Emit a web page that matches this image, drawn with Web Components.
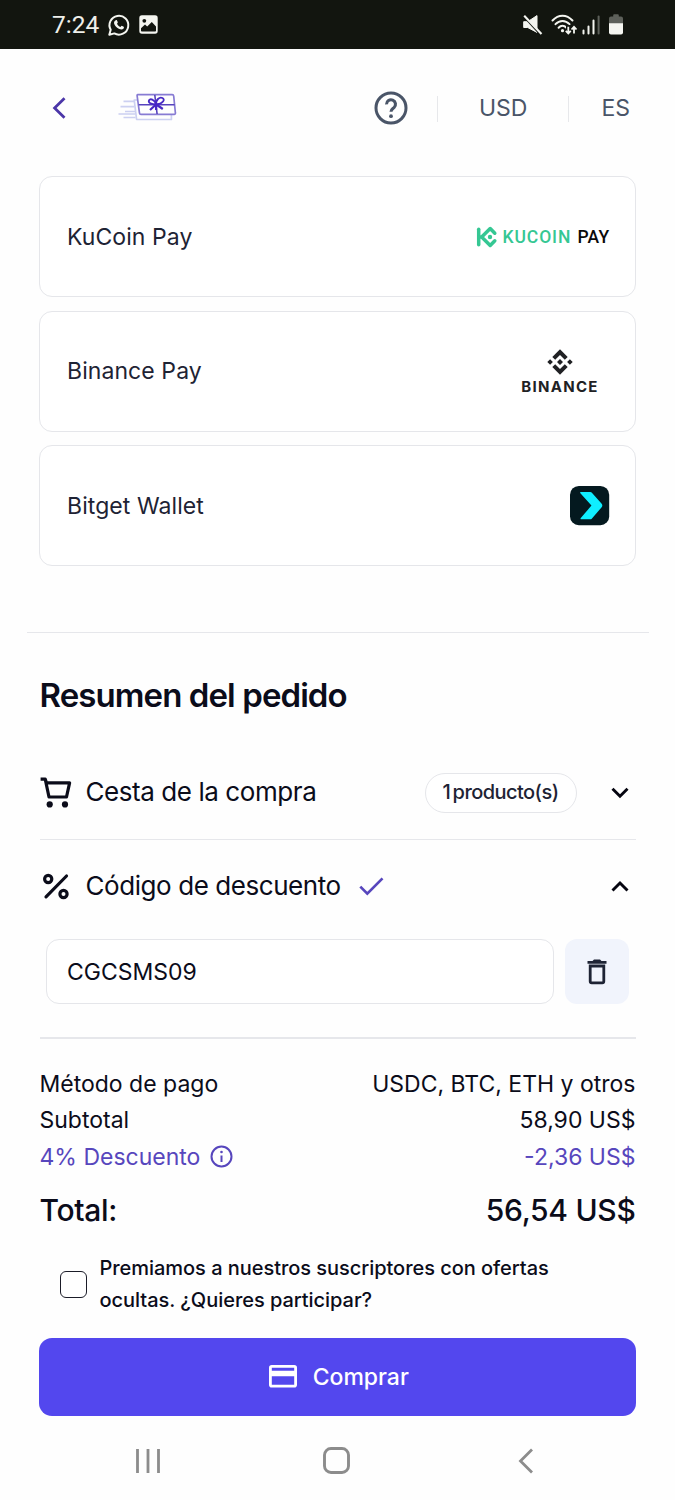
<!DOCTYPE html>
<html lang="es">
<head>
<meta charset="utf-8">
<title>Resumen del pedido</title>
<style>
  html, body { margin: 0; padding: 0; background: #fefefe; }
  body { width: 675px; height: 1500px; overflow: hidden; font-family: Inter, "Liberation Sans", sans-serif; color: #0b0c1a; }
</style>
</head>
<body>
<checkout-app></checkout-app>
<script>
const ICONS = {
  whatsapp: [22, 22, `<path d="M1.3 20.8l1.4-5A9.4 9.4 0 1 1 6.300 19.400z" fill="none" stroke="#f4f5f0" stroke-width="2" stroke-linejoin="round"/><path d="M7.800 6.200c.5-.3 1-.2 1.200.3l.8 1.800c.1.400-.6 1.200-.8 1.500.7 1.500 1.900 2.600 3.400 3.200.4-.3 1-1.300 1.400-1.200l1.900.9c.5.3.2 1.500-.3 2-1 1-2.600 1-4.600.1-2.200-1-4.200-3.200-4.700-5.200-.3-1.400.5-2.900 1.700-3.400z" fill="#f4f5f0"/>`],
  photo: [19, 19, `<rect x=".3" y=".3" width="18.400" height="18.400" rx="2.600" fill="#f4f5f0"/><circle cx="5.300" cy="5.800" r="1.900" fill="#12150f"/><path d="M2 13.200l4-3.600 2.200 1.800 4.600-4.400 4.200 4.400v4.400a.8.800 0 0 1-.8.800H2.800a.8.800 0 0 1-.8-.8z" fill="#12150f"/>`],
  mute: [20, 20, `<path d="M.7 6.700h4L14 .6v16.800l-9.300-4.900h-4z" fill="#f4f5f0" stroke="#f4f5f0" stroke-linejoin="round"/><path d="M-.5-.2L18 20" stroke="#12150f" stroke-width="2.200"/><path d="M1.200.8L18.500 19" stroke="#f4f5f0" stroke-width="2.100"/>`],
  wifi: [28, 22, `<g fill="none" stroke="#f4f5f0" stroke-width="2" stroke-linecap="round"><path d="M1.500 6.500C7.500.1 15.500.1 21.500 6.500"/><path d="M4.500 10.200c4-4.400 10-4.400 14 0"/><path d="M7.600 13.700c2.300-2.500 5.500-2.500 7.800 0"/></g><circle cx="11.500" cy="16.700" r="1.600" fill="#f4f5f0"/><path d="M15 11h11v9H15z" fill="#12150f"/><g fill="none" stroke="#f4f5f0" stroke-width="1.800"><path d="M17.300 12.800v6.500M14.800 16.800l2.500 2.700 2.500-2.700M23 19.500v-6.500M20.500 15.500l2.500-2.700 2.500 2.700"/></g>`],
  signal: [18, 20, `<path d="M1.500 15.500v3M6.500 11.500v7M11.500 5.500v13" stroke="#f4f5f0" stroke-width="2" stroke-linecap="round"/><path d="M16.600 1.500v17" stroke="#5d605a" stroke-width="2" stroke-linecap="round"/>`],
  battery: [14, 21, `<path d="M4.200 2.400V1.200a.9.900 0 0 1 .9-.9h3.800a.9.900 0 0 1 .9.900v1.200H12a2 2 0 0 1 2 2V10H0V4.400a2 2 0 0 1 2-2z" fill="#5d605a"/><path d="M0 9.300h14v9.200a2 2 0 0 1-2 2H2a2 2 0 0 1-2-2z" fill="#f4f5f0"/>`],
  back: [14, 22, `<path d="M12.500 1.300L2.600 11l9.900 9.700" fill="none" stroke="#4b36a8" stroke-width="2.800"/>`],
  gift: [59, 29, `<g fill="none" stroke-linejoin="round"><g stroke="#ccd0f1" stroke-width="1.700"><path d="M19.500 7h-3.300l2.400 19.500h34.800V22"/><path d="M5.500 8.400h11M2.500 13.600h14M7 18.500h10.200M.5 21h16.800M5.500 24.500h12"/></g><path d="M19.600 1.700h34.600a1.500 1.500 0 0 1 1.500 1.300L57.400 20a1.200 1.200 0 0 1-1.200 1.400H23a1.500 1.500 0 0 1-1.500-1.300L19.100 2.700q0-1 .5-1z" fill="#fefefe" stroke="#877bd3" stroke-width="1.700"/><path d="M20.600 11.700h36M36.800 2l2.300 19" stroke="#5642be" stroke-width="1.600"/><g stroke="#4728c4" stroke-width="1.800"><path d="M38.200 11.500C33 11.500 30 9.500 31 7.300s5.500-1 7.200 4.200zM38.300 11.500C37.500 7 41.500 3.500 44.500 5s.5 5.800-6.200 6.500z"/><path d="M38 11.500l-6 5.500M38.300 11.500l6.500 4.500M38.100 11.500V17" stroke-width="2.200"/></g></g>`],
  help: [34, 34, `<circle cx="17" cy="17" r="15" fill="none" stroke="#4a5568" stroke-width="3"/><path d="M12.500 13.400a4.500 4.500 0 1 1 7.500 3.200c-1.800 1.500-3 2-3 4.200" fill="none" stroke="#4a5568" stroke-width="3.100"/><circle cx="17" cy="25.200" r="1.900" fill="#4a5568"/>`],
  kucoin: [21, 22, `<g fill="none" stroke="#35c793" stroke-width="3.500" stroke-linecap="round" stroke-linejoin="round"><path d="M2.700 3.200v15.600"/><path d="M18.800 7.200L14.200 2.500 5.700 11l8.500 8.500 4.600-4.700M2.700 11h3"/></g><circle cx="14" cy="11" r="2.200" fill="#35c793"/>`],
  binance: [26, 26, `<g fill="#202124"><path d="M13 .3l7.700 7.600-2.900 2.900L13 6.100l-4.800 4.700-2.900-2.900zM13 25.700l7.700-7.600-2.900-2.900-4.800 4.700-4.800-4.700-2.900 2.900zM3.100 10.200L5.900 13l-2.800 2.800L.3 13zM22.900 10.200l2.800 2.800-2.800 2.800-2.800-2.800zM13 10l3 3-3 3-3-3z"/></g>`],
  bitget: [39, 39, `<g transform="scale(.98)"><rect width="40" height="40" rx="9" fill="#04191f"/><path d="M11 6h9.700a2 2 0 0 1 1.400.6l10 11.300a3 3 0 0 1 0 4L22.200 33.400a2 2 0 0 1-1.400.6H11.500c-.8 0-1-.8-.5-1.400L21.900 20 10.600 7.300C10 6.700 10.200 6 11 6z" fill="#0feeff"/></g>`],
  cart: [31, 31, `<path d="M.6 2.100h4.600l1.200 3.700h23.200L26.500 20H9L5.400 3" fill="none" stroke="#0b0c1a" stroke-width="3.200" stroke-linejoin="round"/><circle cx="9.700" cy="27.400" r="3.100" fill="#0b0c1a"/><circle cx="25" cy="27.400" r="3.100" fill="#0b0c1a"/>`],
  percent: [26, 25, `<g fill="none" stroke="#0b0c1a"><path d="M23.500 2L3 22.800" stroke-width="3.200" stroke-linecap="round"/><circle cx="5.200" cy="5" r="3.600" stroke-width="3.200"/><circle cx="20.500" cy="20" r="3.600" stroke-width="3.200"/></g>`],
  check: [25, 19, `<path d="M1.300 9.600l7 7.100L23.500 1.400" fill="none" stroke="#5746bd" stroke-width="2.700"/>`],
  down: [18, 12, `<path d="M1.500 1.700L9 9.200l7.500-7.500" fill="none" stroke="#050510" stroke-width="2.900"/>`],
  up: [18, 12, `<path d="M1.500 9.500L9 2l7.500 7.500" fill="none" stroke="#050510" stroke-width="2.900"/>`],
  trash: [20, 26, `<path d="M.5 2h5L7 .5h6L14.500 2h5v2.700H.5z" fill="#1e2334"/><path d="M3.200 7h13.600v15.300a1.500 1.500 0 0 1-1.500 1.500H4.700a1.500 1.500 0 0 1-1.500-1.500z" fill="none" stroke="#1e2334" stroke-width="2.800"/>`],
  info: [23, 23, `<circle cx="11.500" cy="11.500" r="10" fill="none" stroke="#5746bd" stroke-width="2"/><path d="M11.500 10.500v6.500" stroke="#5746bd" stroke-width="2"/><circle cx="11.500" cy="7" r="1.300" fill="#5746bd"/>`],
  card: [28, 23, `<path fill-rule="evenodd" fill="#fff" d="M2.800 0h22.400A2.800 2.800 0 0 1 28 2.800v17a2.800 2.800 0 0 1-2.800 2.800H2.800A2.800 2.800 0 0 1 0 19.800v-17A2.800 2.800 0 0 1 2.800 0zM2.800 2.800v3h22.400v-3zM2.800 11.200v8.600h22.400v-8.600z"/>`],
  recents: [24, 26, `<path d="M1.500 1v24M12 1v24M22.500 1v24" stroke="#8c8c8c" stroke-width="2.800"/>`],
  home: [27, 27, `<rect x="1.500" y="1.500" width="24" height="24" rx="6.500" fill="none" stroke="#8c8c8c" stroke-width="2.900"/>`],
  navback: [16, 26, `<path d="M14 1.500L2.500 13 14 24.500" fill="none" stroke="#8c8c8c" stroke-width="2.800"/>`]
};

function define(name, build) {
  customElements.define(name, class extends HTMLElement {
    connectedCallback() {
      if (this.shadowRoot) return;
      this.attachShadow({ mode: 'open' }).innerHTML = build(this);
    }
  });
}

define('ui-icon', el => {
  const [w, h, body] = ICONS[el.getAttribute('name')];
  return `<style>:host{display:block;flex:none;width:${w}px;height:${h}px}svg{display:block;overflow:visible}</style>
  <svg width="${w}" height="${h}" viewBox="0 0 ${w} ${h}" aria-hidden="true">${body}</svg>`;
});

define('status-bar', () => `
<style>
  :host{display:flex;align-items:center;height:49px;box-sizing:border-box;padding:0 52px 0 52px;background:#12150f;color:#eeefea;font:400 24.500px Roboto,sans-serif}
  .time{width:56px;white-space:nowrap}
  .right{display:flex;align-items:center;margin-left:auto}
</style>
<span class="time">7:24</span><ui-icon name="whatsapp"></ui-icon><ui-icon name="photo" style="margin-left:9px"></ui-icon>
<div class="right"><ui-icon name="mute"></ui-icon><ui-icon name="wifi" style="margin-left:8px"></ui-icon><ui-icon name="signal" style="margin-left:3px"></ui-icon><ui-icon name="battery" style="margin-left:9px"></ui-icon></div>`);

define('top-nav', () => `
<style>
  :host{display:flex;align-items:center;height:127px;box-sizing:border-box;padding:0 45px 9px 52px;color:#4a5568;font-size:23px}
  i{display:block;width:2px;height:26px;margin-top:1px;background:#e7e8eb}
  .usd{margin:0 41px}.es{margin-left:32px}
</style>
<ui-icon name="back"></ui-icon><ui-icon name="gift" style="margin:-1px 0 0 52px"></ui-icon>
<ui-icon name="help" style="margin-left:197px"></ui-icon><i style="margin-left:29px"></i><span class="usd">USD</span><i></i><span class="es">ES</span>`);

define('pay-option', () => `
<style>
  :host{display:flex;align-items:center;justify-content:space-between;height:121px;box-sizing:border-box;border:1px solid #e5e6ea;border-radius:13px;padding:0 26px 0 27px;font-size:23px;letter-spacing:.08px;color:#1e2334;background:#fff}
</style>
<span><slot></slot></span><slot name="logo"></slot>`);

define('kucoin-logo', () => `
<style>
  :host{display:flex;align-items:center;font:500 17.500px Roboto,sans-serif;color:#0a0a0a;white-space:nowrap}
  .k{color:#35c793;margin-left:6px;width:75px;letter-spacing:.9px}
  .p{letter-spacing:.2px;width:31px}
</style>
<ui-icon name="kucoin"></ui-icon><span class="k">KUCOIN</span><span class="p">PAY</span>`);

define('binance-logo', () => `
<style>
  :host{display:flex;flex-direction:column;align-items:center;width:78px;margin:2px 10px 0 0;font:700 15px/16px Inter,sans-serif;letter-spacing:1.300px;color:#202124}
  span{margin:4px 0 0 1px}
</style>
<ui-icon name="binance"></ui-icon><span>BINANCE</span>`);

define('section-row', () => `
<style>
  :host{display:flex;align-items:center;box-sizing:border-box;padding-right:7px;font-size:26px;letter-spacing:-.43px;height:93px}
  .ico{width:46px;flex:none;display:flex}
  .txt{margin-top:-2px}
  .end{margin-left:auto;display:flex;align-items:center}
</style>
<div class="ico"><slot name="icon"></slot></div><span class="txt"><slot></slot></span><slot name="mark"></slot><div class="end"><slot name="end"></slot></div>`);

define('count-pill', () => `
<style>
  :host{display:flex;align-items:center;justify-content:center;box-sizing:border-box;width:152px;height:40px;margin:1px 34px 0 0;border:1px solid #e5e6ea;border-radius:20px;font-size:20px;font-weight:500;letter-spacing:-.55px;word-spacing:-2.500px;color:#1e2334;background:#fff}
  span{margin-top:-2px}
</style><span><slot></slot></span>`);

define('coupon-form', () => `
<style>
  :host{display:flex;gap:11px;margin:6px 7px 0 6.500px;height:65px}
  .field{flex:1;display:flex;align-items:center;box-sizing:border-box;border:1px solid #e5e6ea;border-radius:13px;padding-left:20px;font-size:23px;background:#fff}
  .del{display:flex;align-items:center;justify-content:center;width:64px;border:0;padding:0;border-radius:12px;background:#f1f4fc}
</style>
<div class="field"><slot></slot></div><button class="del" aria-label="Eliminar"><ui-icon name="trash"></ui-icon></button>`);

define('price-line', () => `
<style>
  :host{display:flex;align-items:center;justify-content:space-between;height:36.500px;font-size:23px;white-space:nowrap}
  :host([accent]){color:#5746bd}
  :host([total]){height:58px;font-size:30px;font-weight:450;letter-spacing:-.3px;margin-top:5.500px}
  .l{display:flex;align-items:center;gap:10px}
</style>
<span class="l"><slot></slot></span><span><slot name="value"></slot></span>`);

define('opt-in', () => `
<style>
  :host{display:flex;align-items:center;height:64px;padding-left:20.500px;font-size:20px;line-height:32px;font-weight:500;letter-spacing:-.04px}
  .box{flex:none;width:27px;height:27px;box-sizing:border-box;border:1.500px solid #1b1c28;border-radius:6px;margin-right:12.500px;background:#fff}
  .txt{margin-top:-1px}
</style><span class="box"></span><span class="txt"><slot></slot></span>`);

define('buy-button', () => `
<style>
  :host{display:flex;align-items:center;justify-content:center;gap:16px;height:78px;margin:21px 0 0 -.5px;padding-left:3px;box-sizing:border-box;border-radius:13px;background:#5347ee;color:#fff;font-size:23px;font-weight:500}
</style><ui-icon name="card"></ui-icon><span><slot></slot></span>`);

define('system-nav', () => `
<style>
  :host{display:flex;align-items:center;justify-content:space-between;height:84px;padding:6px 141px 0 135.500px;box-sizing:border-box}
</style><ui-icon name="recents"></ui-icon><ui-icon name="home" style="margin-right:5px"></ui-icon><ui-icon name="navback"></ui-icon>`);

define('checkout-app', () => `
<style>
  :host{display:block;width:675px;height:1500px}
  .methods{display:grid;gap:13.500px;margin:0 39.500px 0 39px}
  hr{border:0;height:1.500px;margin:0;background:#e6e7eb}
  .split{margin:65.500px 26px 0 27px}
  main{margin:0 39.500px}
  h1{margin:41px 0 0;height:42px;line-height:42px;font-size:33px;font-weight:600;letter-spacing:-.92px}
  .sum{margin-top:27.200px}
</style>
<status-bar></status-bar><top-nav></top-nav>
<div class="methods">
  <pay-option>KuCoin Pay<kucoin-logo slot="logo"></kucoin-logo></pay-option>
  <pay-option>Binance Pay<binance-logo slot="logo"></binance-logo></pay-option>
  <pay-option>Bitget Wallet<ui-icon slot="logo" name="bitget"></ui-icon></pay-option>
</div>
<hr class="split">
<main>
  <h1>Resumen del pedido</h1>
  <section-row style="margin-top:29.500px"><ui-icon slot="icon" name="cart"></ui-icon>Cesta de la compra<count-pill slot="end">1 producto(s)</count-pill><ui-icon slot="end" name="down" style="margin-top:1px"></ui-icon></section-row>
  <hr>
  <section-row><ui-icon slot="icon" name="percent" style="margin-left:3px"></ui-icon>Código de descuento<ui-icon slot="mark" name="check" style="margin-left:18px"></ui-icon><ui-icon slot="end" name="up"></ui-icon></section-row>
  <coupon-form>CGCSMS09</coupon-form>
  <hr style="margin-top:33px">
  <div class="sum">
    <price-line>Método de pago<span slot="value">USDC, BTC, ETH y otros</span></price-line>
    <price-line>Subtotal<span slot="value">58,90 US$</span></price-line>
    <price-line accent>4% Descuento<ui-icon name="info"></ui-icon><span slot="value">-2,36 US$</span></price-line>
    <price-line total>Total:<span slot="value">56,54 US$</span></price-line>
  </div>
  <opt-in style="margin-top:14.300px">Premiamos a nuestros suscriptores con ofertas<br>ocultas. ¿Quieres participar?</opt-in>
  <buy-button>Comprar</buy-button>
</main>
<system-nav></system-nav>`);
</script>
</body>
</html>
